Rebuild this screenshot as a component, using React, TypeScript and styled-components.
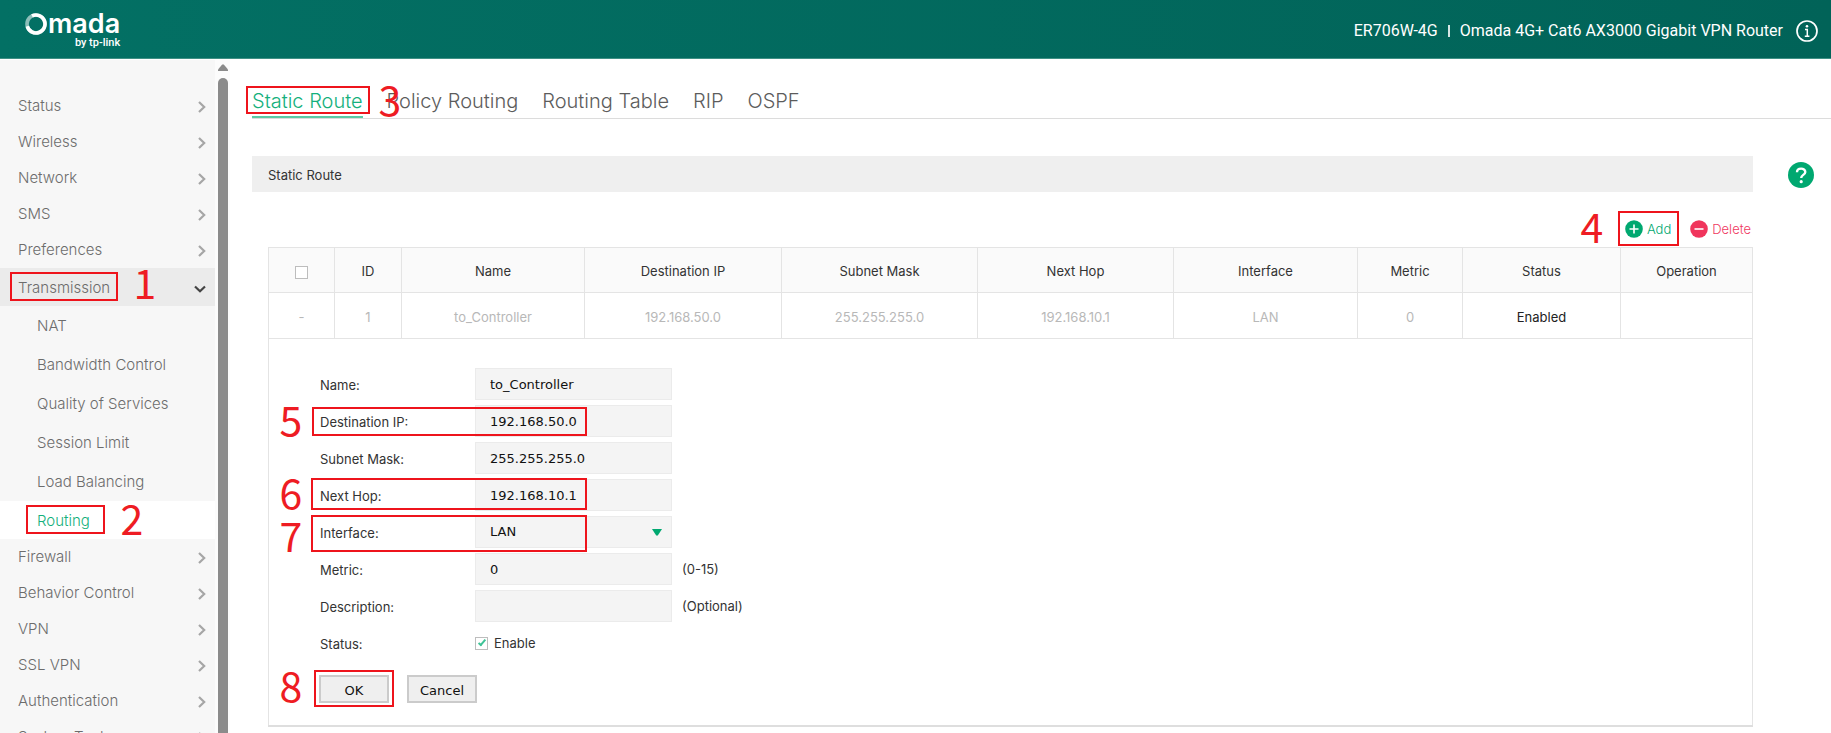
import React from "react";
import styled, { createGlobalStyle, css } from "styled-components";

const sans = `Inter, Roboto, "Liberation Sans", sans-serif`;
const system = `"DejaVu Sans", Verdana, sans-serif`;
const green = "#00a870";
const line = "#e4e4e4";

const GlobalStyle = createGlobalStyle`
  *, *::before, *::after { box-sizing: border-box; }
  body { margin: 0; background: #fff; font-family: ${sans}; font-size: 13px; color: #333; }
  ul { list-style: none; margin: 0; padding: 0; }
  a { color: inherit; text-decoration: none; }
  button, input, select { margin: 0; }
`;

const Page = styled.div`
  display: flex;
  flex-direction: column;
  height: 100vh;
  overflow: hidden;
`;

/* ---------- header ---------- */

const Header = styled.header`
  flex: none;
  display: flex;
  align-items: center;
  justify-content: space-between;
  height: 59px;
  padding: 0 13px 0 25px;
  color: #fff;
  background: linear-gradient(90deg, #037064, #016358);
  border-bottom: 1px solid #3f9085;
`;

const Logo = styled.a`
  display: flex;
  flex-direction: column;
  align-items: flex-end;
`;

const LogoName = styled.span`
  display: flex;
  align-items: center;
  gap: 1px;
  font-size: 27px;
  line-height: 28px;
  font-weight: 600;
`;

const LogoBy = styled.span`
  font-family: Roboto, sans-serif;
  font-size: 11px;
  line-height: 10px;
  font-weight: 500;
`;

const Device = styled.div`
  display: flex;
  align-items: center;
  gap: 10px;
  font-family: Roboto, sans-serif;
  font-size: 16px;
  font-weight: 400;
  padding-top: 3px;
`;

const Bar = styled.span`
  width: 2px;
  height: 12px;
  background: #d5e6e4;
`;

const InfoButton = styled.button`
  display: flex;
  margin-left: 3px;
  padding: 0;
  border: 0;
  background: none;
  color: #fff;
`;

/* ---------- side menu ---------- */

const Body = styled.div`
  flex: 1;
  min-height: 0;
  display: flex;
  padding-top: 1px;
`;

const Sidebar = styled.nav`
  flex: none;
  width: 215px;
  padding-top: 28px;
  overflow-y: auto;
  scrollbar-width: none;
  background: #f7f7f7;
  color: #6c6c6c;
  font-size: 15px;
  font-weight: 300;
`;

const MenuItem = styled.a<{ $open?: boolean }>`
  position: relative;
  display: flex;
  align-items: center;
  justify-content: space-between;
  height: 36px;
  padding: 0 9px 2px 18px;
  svg { margin-top: 3px; }
  ${(p) =>
    p.$open &&
    css`
      height: 38px;
      padding-bottom: 0;
      background: #ebebeb;
    `}
`;

const SubItem = styled.a<{ $active?: boolean }>`
  position: relative;
  display: flex;
  align-items: center;
  height: 39px;
  padding-left: 37px;
  ${(p) =>
    p.$active &&
    css`
      height: 38px;
      background: #fff;
      color: #14b07c;
    `}
`;

const ScrollColumn = styled.div`
  flex: none;
  display: flex;
  flex-direction: column;
  align-items: center;
  gap: 7px;
  width: 15px;
  padding: 4px 0 0 1px;
  background: #fcfcfc;
`;

const ScrollThumb = styled.div`
  flex: 1;
  width: 10px;
  border-radius: 5px 5px 0 0;
  background: #8b8b8b;
`;

/* ---------- main column ---------- */

const Main = styled.main`
  flex: 1;
  min-width: 0;
  overflow-y: auto;
  scrollbar-width: none;
  padding-left: 22px;
`;

const Tabs = styled.div`
  display: flex;
  align-items: flex-end;
  gap: 24px;
  height: 59px;
  border-bottom: 1px solid #dcdcdc;
`;

const Tab = styled.a<{ $active?: boolean }>`
  position: relative;
  padding-bottom: 2px;
  font-size: 20px;
  line-height: 26px;
  font-weight: 300;
  color: ${(p) => (p.$active ? "#14b07c" : "#5c5c5c")};
  border-bottom: 2px solid ${(p) => (p.$active ? "#5cc9a3" : "transparent")};
`;

const Section = styled.section`
  position: relative;
  margin: 37px 78px 0 0;
`;

const SectionTitle = styled.h2`
  margin: 0;
  padding: 2px 16px 0;
  font-size: 13px;
  line-height: 34px;
  font-weight: 400;
  background: #efefef;
`;

const HelpButton = styled.button`
  position: absolute;
  right: -61px;
  top: 6px;
  display: flex;
  padding: 0;
  border: 0;
  background: none;
`;

const Tools = styled.div`
  display: flex;
  justify-content: flex-end;
  align-items: flex-start;
  gap: 19px;
  height: 55px;
  padding: 28px 2px 0 0;
`;

const ToolButton = styled.button<{ $color: string }>`
  position: relative;
  display: flex;
  align-items: center;
  gap: 4px;
  height: 18px;
  padding: 0;
  border: 0;
  background: none;
  font: 300 13px ${sans};
  color: ${(p) => p.$color};
`;

const Grid = styled.table`
  width: calc(100% - 16px);
  margin-left: 16px;
  table-layout: fixed;
  border-collapse: collapse;
`;

const HeadCell = styled.th`
  height: 45px;
  padding: 2px 0 0;
  font-weight: 400;
  text-align: center;
  background: #fafafa;
  border: 1px solid ${line};
`;

const Cell = styled.td<{ $dark?: boolean }>`
  height: 46px;
  padding: 2px 0 0;
  text-align: center;
  color: ${(p) => (p.$dark ? "#222" : "#b8b8b8")};
  border: 1px solid ${line};
`;

const FormCell = styled.td`
  padding: 29px 0 22px 51px;
  border: 1px solid ${line};
  border-bottom: 2px solid #dedede;
`;

const Form = styled.form`
  display: flex;
  flex-direction: column;
  gap: 5px;
`;

const Row = styled.div`
  position: relative;
  display: flex;
  align-items: center;
  height: 32px;
`;

const Label = styled.label`
  width: 155px;
  padding-top: 2px;
`;

const field = css`
  width: 197px;
  height: 32px;
  padding: 0 14px;
  border: 1px solid #ebebeb;
  border-radius: 0;
  outline: 0;
  background: #f4f4f4;
  color: #111;
  font: 13px ${system};
`;

const TextInput = styled.input`
  ${field}
`;

const SelectBox = styled.div`
  display: grid;
  align-items: center;
  svg, select { grid-area: 1 / 1; }
  svg { justify-self: end; margin-right: 10px; pointer-events: none; }
`;

const Select = styled.select`
  ${field}
  padding-bottom: 1px;
  appearance: none;
`;

const Hint = styled.span`
  margin-left: 10px;
`;

const CheckBox = styled.input`
  appearance: none;
  display: inline-grid;
  place-items: center;
  width: 13px;
  height: 13px;
  border: 1px solid #bdbdbd;
  background: #fff;
  vertical-align: middle;
  &:checked::after {
    content: "";
    width: 4px;
    height: 8px;
    margin-bottom: 2px;
    border: solid #3fc397;
    border-width: 0 2px 2px 0;
    transform: rotate(40deg);
  }
`;

const CheckLabel = styled.label`
  margin-left: 6px;
`;

const Buttons = styled.div`
  display: flex;
  gap: 18px;
  margin: 11px 0 0 -1px;
`;

const ButtonSlot = styled.div`
  position: relative;
`;

const FormButton = styled.button`
  width: 70px;
  height: 28px;
  padding: 2px 0 0;
  border: 2px solid #cbcbcb;
  border-radius: 0;
  background: #efefef;
  color: #111;
  font: 13px ${system};
`;

/* ---------- numbered callouts lying over the page ---------- */

const Frame = styled.span<{ $x: number; $y: number; $w: number; $h: number }>`
  position: absolute;
  z-index: 2;
  left: ${(p) => p.$x}px;
  top: ${(p) => p.$y}px;
  width: ${(p) => p.$w}px;
  height: ${(p) => p.$h}px;
  border: 2px solid #ee141c;
  pointer-events: none;
`;

const Numeral = styled.span<{ $x: number; $y: number }>`
  position: absolute;
  z-index: 2;
  left: ${(p) => p.$x}px;
  top: ${(p) => p.$y}px;
  width: 24px;
  text-align: center;
  font: 400 41px/22px "Noto Sans CJK SC", sans-serif;
  color: #ee1c23;
  pointer-events: none;
`;

type CalloutProps = { n: number; x: number; y: number; w: number; h: number; nx: number; ny: number };

const Callout = ({ n, x, y, w, h, nx, ny }: CalloutProps) => (
  <>
    <Frame $x={x} $y={y} $w={w} $h={h} />
    <Numeral $x={nx} $y={ny}>{n}</Numeral>
  </>
);

/* ---------- icons ---------- */

const ChevronRight = () => (
  <svg width="8" height="12" viewBox="0 0 8 12" fill="none" stroke="#a6a6a6" strokeWidth="2.200">
    <path d="M1 1 6.200 6 1 11" />
  </svg>
);

const ChevronDown = () => (
  <svg width="12" height="8" viewBox="0 0 12 8" fill="none" stroke="#444" strokeWidth="2.200">
    <path d="M1 1.500 6 6.300 11 1.500" />
  </svg>
);

const RingO = () => (
  <svg width="22" height="22" viewBox="0 0 22 22" fill="none" strokeWidth="3.600">
    <circle cx="11" cy="11" r="9" stroke="#fff" strokeOpacity="0.55" />
    <path d="M7 2.950A9 9 0 1 1 2.300 13.300" stroke="#fff" />
  </svg>
);

const InfoIcon = () => (
  <svg width="22" height="22" viewBox="0 0 22 22" fill="none" stroke="#fff">
    <circle cx="11" cy="11" r="10" strokeWidth="1.700" />
    <circle cx="11" cy="6.300" r="1.300" fill="#fff" stroke="none" />
    <path d="M9 9.500h2.300v6.500M8.800 16.200h4.600" strokeWidth="1.500" />
  </svg>
);

const HelpIcon = () => (
  <svg width="26" height="26" viewBox="0 0 26 26" fill="none">
    <circle cx="13" cy="13" r="13" fill={green} />
    <path d="M9 10.200c0-4.800 8.300-4.700 8.300-.2 0 2.900-4.100 2.900-4.100 5.900" stroke="#fff" strokeWidth="2.400" />
    <circle cx="13.200" cy="19.700" r="1.600" fill="#fff" />
  </svg>
);

const RoundIcon = ({ color, plus }: { color: string; plus?: boolean }) => (
  <svg width="18" height="18" viewBox="0 0 18 18" stroke="#fff" strokeWidth="1.600">
    <circle cx="9" cy="9" r="8.800" fill={color} stroke="none" />
    <path d={plus ? "M4.500 9h9M9 4.500v9" : "M4.500 9h9"} />
  </svg>
);

/* ---------- data ---------- */

const menuTop = ["Status", "Wireless", "Network", "SMS", "Preferences"];
const subMenu = ["NAT", "Bandwidth Control", "Quality of Services", "Session Limit", "Load Balancing", "Routing"];
const menuBottom = ["Firewall", "Behavior Control", "VPN", "SSL VPN", "Authentication", "System Tools"];
const tabs = ["Static Route", "Policy Routing", "Routing Table", "RIP", "OSPF"];

const columns: [string, number][] = [
  ["", 66],
  ["ID", 67],
  ["Name", 183],
  ["Destination IP", 197],
  ["Subnet Mask", 196],
  ["Next Hop", 196],
  ["Interface", 184],
  ["Metric", 105],
  ["Status", 158],
  ["Operation", 132],
];
const route = ["-", "1", "to_Controller", "192.168.50.0", "255.255.255.0", "192.168.10.1", "LAN", "0", "Enabled", ""];

const MenuLinks = ({ items }: { items: string[] }) => (
  <>
    {items.map((t) => (
      <li key={t}>
        <MenuItem href="#">
          {t}
          <ChevronRight />
        </MenuItem>
      </li>
    ))}
  </>
);

const App = () => (
  <Page>
    <GlobalStyle />
    <Header>
      <Logo href="#" aria-label="Omada by tp-link">
        <LogoName>
          <RingO />
          mada
        </LogoName>
        <LogoBy>by tp-link</LogoBy>
      </Logo>
      <Device>
        <span>ER706W-4G</span>
        <Bar />
        <span>Omada 4G+ Cat6 AX3000 Gigabit VPN Router</span>
        <InfoButton aria-label="Information">
          <InfoIcon />
        </InfoButton>
      </Device>
    </Header>

    <Body>
      <Sidebar>
        <ul>
          <MenuLinks items={menuTop} />
          <li>
            <MenuItem href="#" $open>
              Transmission
              <ChevronDown />
              <Callout n={1} x={10} y={4} w={108} h={29} nx={133} ny={2} />
            </MenuItem>
            <ul>
              {subMenu.map((t) => (
                <li key={t}>
                  <SubItem href="#" $active={t === "Routing"}>
                    {t}
                    {t === "Routing" && <Callout n={2} x={26} y={4} w={79} h={29} nx={120} ny={5} />}
                  </SubItem>
                </li>
              ))}
            </ul>
          </li>
          <MenuLinks items={menuBottom} />
        </ul>
      </Sidebar>
      <ScrollColumn>
        <svg width="10" height="7" viewBox="0 0 10 7">
          <path d="M4.200.5h1.600L10 5.500V7H0V5.500z" fill="#8b8b8b" />
        </svg>
        <ScrollThumb />
      </ScrollColumn>

      <Main>
        <Tabs>
          {tabs.map((t, i) => (
            <Tab key={t} href="#" $active={i === 0}>
              {t}
              {i === 0 && <Callout n={3} x={-6} y={-2} w={124} h={28} nx={126} ny={-1} />}
            </Tab>
          ))}
        </Tabs>

        <Section>
          <SectionTitle>Static Route</SectionTitle>
          <HelpButton aria-label="Help">
            <HelpIcon />
          </HelpButton>
          <Tools>
            <ToolButton $color={green}>
              <RoundIcon color={green} plus />
              Add
              <Callout n={4} x={-7} y={-9} w={61} h={35} nx={-45} ny={-6} />
            </ToolButton>
            <ToolButton $color="#f0395f">
              <RoundIcon color="#f0355c" />
              Delete
            </ToolButton>
          </Tools>

          <Grid>
            <colgroup>
              {columns.map(([name, w]) => (
                <col key={name} width={w} />
              ))}
            </colgroup>
            <thead>
              <tr>
                {columns.map(([name]) => (
                  <HeadCell key={name}>{name || <CheckBox type="checkbox" aria-label="Select all" />}</HeadCell>
                ))}
              </tr>
            </thead>
            <tbody>
              <tr>
                {route.map((v, i) => (
                  <Cell key={i} $dark={v === "Enabled"}>{v}</Cell>
                ))}
              </tr>
              <tr>
                <FormCell colSpan={columns.length}>
                  <Form>
                    <Row>
                      <Label htmlFor="name">Name:</Label>
                      <TextInput id="name" defaultValue="to_Controller" />
                    </Row>
                    <Row>
                      <Label htmlFor="dest">Destination IP:</Label>
                      <TextInput id="dest" defaultValue="192.168.50.0" />
                      <Callout n={5} x={-8} y={2} w={275} h={29} nx={-41} ny={2} />
                    </Row>
                    <Row>
                      <Label htmlFor="mask">Subnet Mask:</Label>
                      <TextInput id="mask" defaultValue="255.255.255.0" />
                    </Row>
                    <Row>
                      <Label htmlFor="hop">Next Hop:</Label>
                      <TextInput id="hop" defaultValue="192.168.10.1" />
                      <Callout n={6} x={-9} y={-1} w={276} h={32} nx={-41} ny={1} />
                    </Row>
                    <Row>
                      <Label htmlFor="iface">Interface:</Label>
                      <SelectBox>
                        <Select id="iface" defaultValue="LAN">
                          <option>LAN</option>
                        </Select>
                        <svg width="10" height="7" viewBox="0 0 10 7">
                          <path d="M0 0h10L5.800 6.500H4.200z" fill={green} />
                        </svg>
                      </SelectBox>
                      <Callout n={7} x={-9} y={-1} w={276} h={37} nx={-41} ny={7} />
                    </Row>
                    <Row>
                      <Label htmlFor="metric">Metric:</Label>
                      <TextInput id="metric" defaultValue="0" />
                      <Hint>(0-15)</Hint>
                    </Row>
                    <Row>
                      <Label htmlFor="desc">Description:</Label>
                      <TextInput id="desc" />
                      <Hint>(Optional)</Hint>
                    </Row>
                    <Row>
                      <Label as="span">Status:</Label>
                      <CheckBox id="enable" type="checkbox" defaultChecked />
                      <CheckLabel htmlFor="enable">Enable</CheckLabel>
                    </Row>
                    <Buttons>
                      <ButtonSlot>
                        <FormButton type="button">OK</FormButton>
                        <Callout n={8} x={-5} y={-5} w={80} h={37} nx={-40} ny={-2} />
                      </ButtonSlot>
                      <FormButton type="button">Cancel</FormButton>
                    </Buttons>
                  </Form>
                </FormCell>
              </tr>
            </tbody>
          </Grid>
        </Section>
      </Main>
    </Body>
  </Page>
);

export default App;
